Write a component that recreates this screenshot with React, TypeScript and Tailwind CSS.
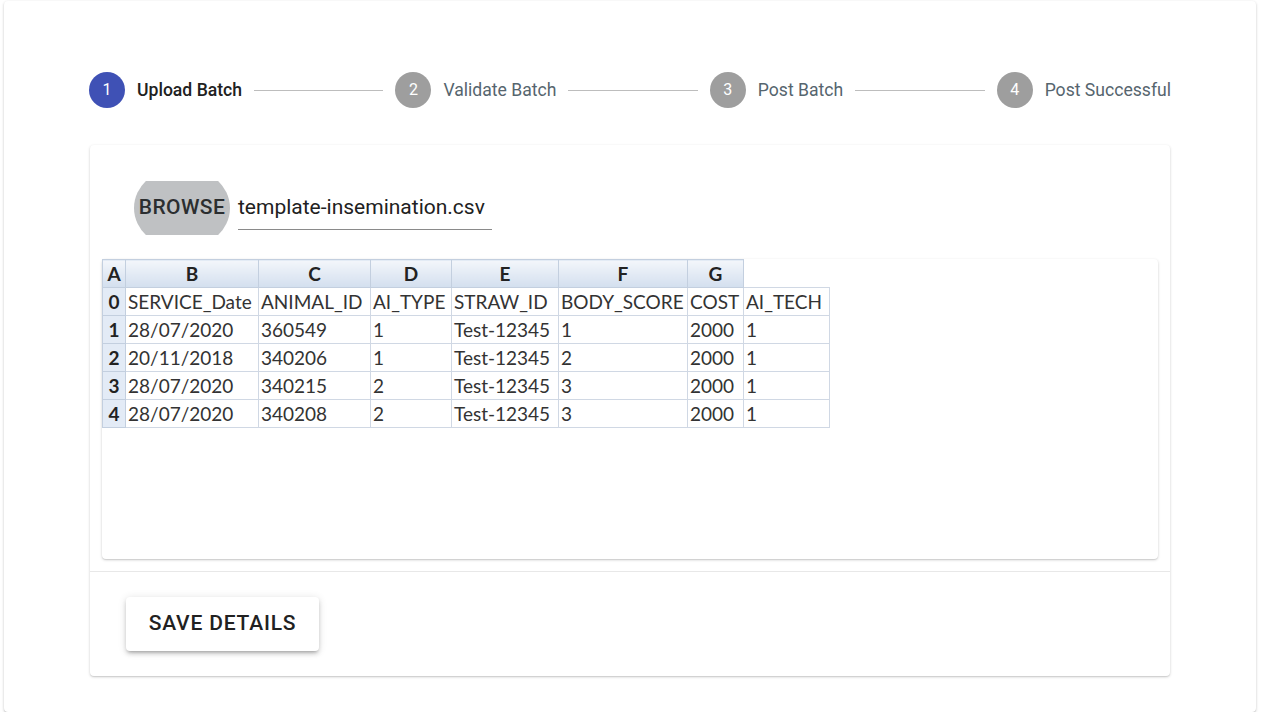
import React from "react";

const steps = ["Upload Batch", "Validate Batch", "Post Batch", "Post Successful"];

const letters = ["A", "B", "C", "D", "E", "F", "G"];
const widths = ["w-[23px]", "w-[133px]", "w-[112px]", "w-[81px]", "w-[107px]", "w-[129px]", "w-[56px]", "w-[86px]"];

const rows = [
  ["SERVICE_Date", "ANIMAL_ID", "AI_TYPE", "STRAW_ID", "BODY_SCORE", "COST", "AI_TECH"],
  ["28/07/2020", "360549", "1", "Test-12345", "1", "2000", "1"],
  ["20/11/2018", "340206", "1", "Test-12345", "2", "2000", "1"],
  ["28/07/2020", "340215", "2", "Test-12345", "3", "2000", "1"],
  ["28/07/2020", "340208", "2", "Test-12345", "3", "2000", "1"],
];

const Stepper = () => (
  <div className="flex items-center px-[85px] pt-[71px]">
    {steps.map((label, i) => (
      <React.Fragment key={label}>
        <div className="flex items-center gap-3">
          <div
            className={
              i === 0
                ? "flex h-9 w-9 items-center justify-center rounded-full bg-[#3f51b5] text-base text-white"
                : "flex h-9 w-9 items-center justify-center rounded-full bg-[#9e9e9e] text-base text-white"
            }
          >
            {i + 1}
          </div>
          <span
            className={
              i === 0
                ? "text-[17.6px] font-medium text-[#212121]"
                : "text-[17.6px] text-[#56656e]"
            }
          >
            {label}
          </span>
        </div>
        {i < steps.length - 1 && <div className="mx-3 h-px flex-1 bg-[#bdbdbd]" />}
      </React.Fragment>
    ))}
  </div>
);

const Sheet = () => (
  <div className="mx-3 h-[300px] rounded bg-white shadow-[0_1px_3px_rgba(0,0,0,0.18),0_1px_1px_rgba(0,0,0,0.08)]">
    <table className="table-fixed border-collapse font-['Lato',sans-serif] text-[19px] leading-none text-[#333]">
      <colgroup>
        {widths.map((w) => (
          <col key={w} className={w} />
        ))}
      </colgroup>
      <thead>
        <tr>
          {letters.map((l) => (
            <th
              key={l}
              className="h-[28px] border border-[#c3cfdf] bg-gradient-to-b from-[#f3f6fb] to-[#d3dfee] p-0 text-center font-bold text-[#222]"
            >
              {l}
            </th>
          ))}
          <th className="h-[28px] p-0" />
        </tr>
      </thead>
      <tbody>
        {rows.map((r, i) => (
          <tr key={i}>
            <td className="h-[28px] border border-[#c3cfdf] bg-[#e3ebf6] p-0 text-center font-bold text-[#222]">
              {i}
            </td>
            {r.map((c, j) => (
              <td
                key={j}
                className="h-[28px] overflow-hidden whitespace-nowrap border border-[#d0d8e4] px-[2px] py-0"
              >
                {c}
              </td>
            ))}
          </tr>
        ))}
      </tbody>
    </table>
  </div>
);

export default function App() {
  return (
    <div className="bg-white pl-[4px] pr-[5px] pt-px font-['Roboto',sans-serif]">
      <div className="h-[711px] rounded bg-white shadow-[0_1px_3px_rgba(0,0,0,0.2),0_1px_1px_rgba(0,0,0,0.1)]">
        <Stepper />
        <div className="mx-[86px] mt-[37px] h-[531px] rounded bg-white shadow-[0_1px_3px_rgba(0,0,0,0.18),0_1px_1px_rgba(0,0,0,0.08)]">
          <div className="pt-9">
            <div className="flex items-start gap-2 pl-11">
              <div className="h-[54px] w-24 overflow-hidden">
                <div className="-mt-[14px] flex h-[82px] w-24 items-center justify-center rounded-[50%] bg-[#bfc1c3]">
                  <span className="text-[21px] font-medium tracking-[0.4px] text-[#2b2e30]">BROWSE</span>
                </div>
              </div>
              <div className="w-[254px] border-b border-[#8a8a8a] pt-[11px] pb-[5px] text-[21px] text-[#212121]">
                template-insemination.csv
              </div>
            </div>
            <div className="mt-6">
              <Sheet />
            </div>
          </div>
          <div className="mt-3 h-px bg-[#e8e8e8]" />
          <div className="px-9 pt-[25px]">
            <button className="h-[54px] w-[193px] rounded bg-white text-[21px] font-medium tracking-[0.8px] text-[#212121] shadow-[0_3px_3px_-2px_rgba(0,0,0,0.2),0_3px_4px_0_rgba(0,0,0,0.14),0_1px_8px_0_rgba(0,0,0,0.12)]">
              SAVE DETAILS
            </button>
          </div>
        </div>
      </div>
    </div>
  );
}
